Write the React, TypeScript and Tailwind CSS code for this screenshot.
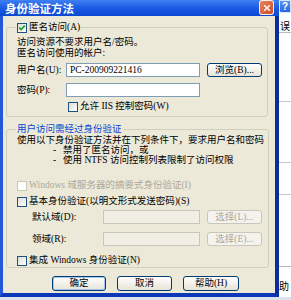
import clsx from "clsx";
import type { ReactNode } from "react";

function Check({ checked = false, disabled = false }: { checked?: boolean; disabled?: boolean }) {
  return (
    <span
      className={clsx(
        "flex h-[10px] w-[10px] shrink-0 items-center justify-center border",
        disabled ? "border-[#cac8bb] bg-white" : "border-[#1c5180] bg-gradient-to-br from-[#dcdcd5] to-white"
      )}
    >
      {checked && (
        <svg viewBox="0 0 8 8" className="h-[8px] w-[8px]">
          <path d="M1.2 3.6 L3.1 5.6 L6.8 1.6" fill="none" stroke="#21a121" strokeWidth="1.7" />
        </svg>
      )}
    </span>
  );
}

function Btn({ children, disabled, primary, className }: { children: ReactNode; disabled?: boolean; primary?: boolean; className?: string }) {
  return (
    <div
      className={clsx(
        "flex shrink-0 items-center justify-center overflow-hidden rounded-[3px] border leading-[11px]",
        disabled
          ? "border-[#c9c7ba] bg-[#f4f3ee] text-[#aca899]"
          : "border-[#003c74] bg-gradient-to-b from-white to-[#e6e3d6] text-black",
        primary && "shadow-[inset_0_0_0_1px_#a9c4ef]",
        className
      )}
    >
      {children}
    </div>
  );
}

function CheckRow({ label, checked, disabled, className }: { label: ReactNode; checked?: boolean; disabled?: boolean; className?: string }) {
  return (
    <div className={clsx("flex h-[11px] items-center gap-[2px] leading-[11px]", disabled && "text-[#aca899]", className)}>
      <Check checked={checked} disabled={disabled} />
      <span className="h-[11px] whitespace-nowrap">{label}</span>
    </div>
  );
}

export default function App() {
  return (
    <div className="flex h-[300px] w-[291px] flex-col overflow-hidden bg-[#dde3ec] text-[9.5px] text-black font-['Liberation_Serif','Noto_Sans_CJK_SC',sans-serif]">
      <div className="flex h-[297px] shrink-0 overflow-hidden">
        {/* dialog */}
        <div className="flex w-[279px] shrink-0 flex-col">
          <div className="flex h-[16px] shrink-0 items-start justify-between bg-gradient-to-b from-[#3f80f3] via-[#1a5be2] to-[#0c49d3] pl-[5px] pr-[5px]">
            <span className="h-[14px] pt-[2px] text-[11.5px] font-bold leading-[12px] text-white font-['Noto_Sans_CJK_SC',sans-serif]">身份验证方法</span>
            <div className="flex h-[15px] w-[15px] items-center justify-center rounded-[3px] border border-white/90 bg-gradient-to-br from-[#e9835c] to-[#cf4a22]">
              <svg viewBox="0 0 10 10" className="h-[8px] w-[8px]">
                <path d="M1.5 1.5 L8.5 8.5 M8.5 1.5 L1.5 8.5" stroke="white" strokeWidth="1.8" />
              </svg>
            </div>
          </div>
          <div className="flex min-h-0 flex-1 flex-col border-b-[4px] border-l-[3px] border-r-[4px] border-b-[#0c37b6] border-l-[#2259d9] border-r-[#0a2c9e] bg-[#ece9d8]">
            {/* group 1 */}
            <fieldset className="ml-[3px] mr-[7px] mt-[6px] rounded-[3px] border border-[#d0d0bf] pb-[4px] pl-[10px] pr-[4px]">
              <legend className="-ml-[1px] h-[11px] px-[1px]">
                <CheckRow checked label="匿名访问(A)" />
              </legend>
              <div className="mt-[4px] h-[11px] leading-[11px]">访问资源不要求用户名/密码。</div>
              <div className="h-[11px] leading-[11px]">匿名访问使用的帐户:</div>
              <div className="mt-[4px] flex h-[14px] items-center">
                <span className="h-[11px] w-[49px] shrink-0 leading-[11px]">用户名(U):</span>
                <div className="flex h-[14px] w-[134px] shrink-0 items-center overflow-hidden border border-[#7f9db9] bg-white pl-[3px] leading-[11px]">PC-200909221416</div>
                <Btn className="ml-[7px] h-[14px] w-[55px]">浏览(B)...</Btn>
              </div>
              <div className="mt-[6px] flex h-[14px] items-center">
                <span className="h-[11px] w-[49px] shrink-0 leading-[11px]">密码(P):</span>
                <div className="h-[14px] w-[134px] shrink-0 border border-[#7f9db9] bg-white" />
              </div>
              <CheckRow className="ml-[51px] mt-[4px]" label="允许 IIS 控制密码(W)" />
            </fieldset>

            {/* group 2 */}
            <fieldset className="ml-[3px] mr-[8px] mt-[7px] rounded-[3px] border border-[#d0d0bf] pb-[1px] pl-[10px] pr-[4px]">
              <legend className="-ml-[1px] h-[11px] px-[1px] leading-[11px] text-[#0046d5]">用户访问需经过身份验证</legend>
              <div className="h-[10px] whitespace-nowrap leading-[10px]">使用以下身份验证方法并在下列条件下，要求用户名和密码</div>
              <div className="flex h-[10px] pl-[36px] leading-[10px]">
                <span className="w-[10px] shrink-0">-</span>
                <span>禁用了匿名访问，或</span>
              </div>
              <div className="flex h-[10px] pl-[36px] leading-[10px]">
                <span className="w-[10px] shrink-0">-</span>
                <span>使用 NTFS 访问控制列表限制了访问权限</span>
              </div>
              <CheckRow className="mt-[15px]" disabled label="Windows 域服务器的摘要式身份验证(I)" />
              <CheckRow className="mt-[5px]" label="基本身份验证(以明文形式发送密码)(S)" />
              <div className="mt-[3px] flex h-[14px] items-center pl-[15px]">
                <span className="h-[11px] w-[71px] shrink-0 leading-[11px]">默认域(D):</span>
                <div className="h-[14px] w-[97px] shrink-0 border border-[#c9c7ba] bg-[#f1efe5]" />
                <Btn disabled className="ml-[7px] h-[14px] w-[55px]">选择(L)...</Btn>
              </div>
              <div className="mt-[8px] flex h-[14px] items-center pl-[15px]">
                <span className="h-[11px] w-[71px] shrink-0 leading-[11px]">领域(R):</span>
                <div className="h-[14px] w-[97px] shrink-0 border border-[#c9c7ba] bg-[#f1efe5]" />
                <Btn disabled className="ml-[7px] h-[14px] w-[55px]">选择(E)...</Btn>
              </div>
              <CheckRow className="mt-[9px]" label="集成 Windows 身份验证(N)" />
            </fieldset>

            <div className="ml-[49px] mt-[8px] flex gap-[11px]">
              <Btn primary className="h-[15px] w-[54px]">确定</Btn>
              <Btn className="h-[15px] w-[55px]">取消</Btn>
              <Btn className="h-[15px] w-[56px]">帮助(H)</Btn>
            </div>
          </div>
        </div>

        {/* window behind */}
        <div className="flex flex-1 flex-col overflow-hidden bg-white text-[10px]">
          <div className="flex h-[13px] shrink-0 items-center justify-center rounded-bl-[2px] border border-white/80 bg-gradient-to-b from-[#5b93f5] to-[#2a63e0] text-[10px] font-bold leading-[10px] text-white font-['Liberation_Sans',sans-serif]">?</div>
          <div className="h-[20px] shrink-0 border-b border-[#b9b9b9] pl-[1px] pt-[7px] leading-[11px] font-['Noto_Sans_CJK_SC',sans-serif]">误</div>
          <div className="h-[69px] shrink-0 border-b border-[#c8c8c8]" />
          <div className="h-[61px] shrink-0 border-b border-[#c8c8c8]" />
          <div className="h-[32px] shrink-0 border-b border-[#c8c8c8]" />
          <div className="h-[72px] shrink-0 border-b border-[#b9b9b9]" />
          <div className="pt-[14px] leading-[10px] font-['Noto_Sans_CJK_SC',sans-serif]">助</div>
        </div>
      </div>
      <div className="h-[3px] shrink-0 bg-[#dde3ec]" />
    </div>
  );
}
